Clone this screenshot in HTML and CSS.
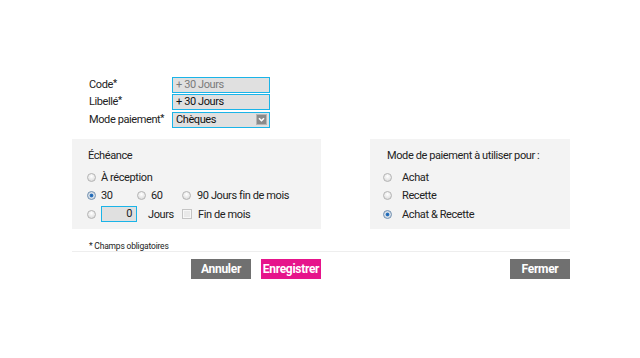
FILE: index.html
```html
<!DOCTYPE html>
<html>

<head>
    <title>Mode de paiement</title>
    <link rel="stylesheet" href="styles.css">
</head>

<body>

    <div class="dialog">

        <!-- Main fields -->
        <div class="fields">
            <div class="field">
                <label>Code<sup>*</sup></label>
                <div class="input muted">+ 30 Jours</div>
            </div>
            <div class="field">
                <label>Libellé<sup>*</sup></label>
                <div class="input">+ 30 Jours</div>
            </div>
            <div class="field last">
                <label>Mode paiement<sup>*</sup></label>
                <div class="input select">
                    <span>Chèques</span>
                    <svg class="arrow" width="11" height="11" viewBox="0 0 11 11">
                        <rect x="0.5" y="0.5" width="10" height="10" fill="#8a8a8a" stroke="#b5b5b5"/>
                        <path d="M3 4.2 L5.5 6.7 L8 4.2" fill="none" stroke="#fff" stroke-width="1.6"/>
                    </svg>
                </div>
            </div>
        </div>

        <!-- Panels -->
        <div class="panels">
            <div class="panel left">
                <div class="panel-title">Échéance</div>
                <div class="row">
                    <span class="cell"><span class="radio"></span>À réception</span>
                </div>
                <div class="row">
                    <span class="cell c1"><span class="radio on"></span>30</span>
                    <span class="cell c2"><span class="radio"></span>60</span>
                    <span class="cell"><span class="radio mid"></span>90 Jours fin de mois</span>
                </div>
                <div class="row">
                    <span class="cell c1"><span class="radio"></span><span class="num">0</span></span>
                    <span class="cell c2 jours">Jours</span>
                    <span class="cell"><span class="check"></span>Fin de mois</span>
                </div>
            </div>

            <div class="panel right">
                <div class="panel-title">Mode de paiement à utiliser pour :</div>
                <div class="row"><span class="cell"><span class="radio wide"></span>Achat</span></div>
                <div class="row"><span class="cell"><span class="radio wide"></span>Recette</span></div>
                <div class="row"><span class="cell"><span class="radio wide on"></span>Achat &amp; Recette</span></div>
            </div>
        </div>

        <div class="note">* Champs obligatoires</div>

        <div class="actions">
            <div class="group left">
                <button class="btn">Annuler</button>
                <button class="btn pink">Enregistrer</button>
            </div>
            <div class="group right">
                <button class="btn">Fermer</button>
            </div>
        </div>

    </div>

</body>

</html>
```

FILE: styles.css
```css
body {
    margin: 0;
    background-color: #fff;
    color: #222;
    font-family: Roboto, "Liberation Sans", Arial, sans-serif;
    font-size: 11px;
    letter-spacing: -0.4px;
}

.dialog {
    width: 498px;
    margin-left: 72px;
    padding-top: 76px;
}

.fields {
    padding-left: 17px;
}

.field {
    display: flex;
    align-items: center;
    height: 17px;
}

.field.last {
    margin-top: 1px;
}

.field label {
    width: 83px;
}

sup {
    font-size: 9px;
    font-weight: bold;
    vertical-align: 2px;
    line-height: 0;
}

.input {
    box-sizing: border-box;
    width: 98px;
    height: 16px;
    border: 1px solid #1ab4e8;
    background-color: #e0e0e0;
    padding: 0 3px;
    line-height: 14px;
    color: #111;
}

.input.muted {
    color: #7a7a7a;
}

.input.select {
    display: flex;
    align-items: center;
    justify-content: space-between;
    padding-right: 2px;
}

.arrow {
    display: block;
}

.panels {
    display: flex;
    justify-content: space-between;
    margin-top: 11px;
}

.panel {
    background-color: #f3f3f3;
    height: 90px;
    box-sizing: border-box;
    padding-top: 8px;
}

.panel.left {
    width: 249px;
    padding-left: 15px;
}

.panel.right {
    width: 200px;
    padding-left: 13px;
}

.panel-title {
    line-height: 18px;
    margin-bottom: 3px;
    padding-left: 1px;
}

.panel.right .panel-title {
    padding-left: 4px;
}

.row {
    display: flex;
    align-items: center;
    height: 18.5px;
}

.cell {
    display: flex;
    align-items: center;
}

.c1 {
    width: 50px;
}

.c2 {
    width: 45px;
}

.jours {
    padding-left: 11px;
    box-sizing: border-box;
}

.radio {
    box-sizing: border-box;
    width: 9px;
    height: 9px;
    border-radius: 50%;
    border: 1px solid #b4b4b4;
    background: radial-gradient(circle at 50% 35%, #fff 0, #e6e6e6 60%, #cfcfcf 100%);
    margin-right: 5px;
}

.radio.mid {
    margin-right: 6px;
}

.radio.wide {
    margin-right: 10px;
}

.radio.on {
    border-color: #6f8fb0;
    background: radial-gradient(circle, #1d5fa8 0, #2d78c4 30%, #cfd9e4 45%, #e8e8e8 100%);
}

.num {
    box-sizing: border-box;
    width: 36px;
    height: 16px;
    border: 1px solid #1ab4e8;
    background-color: #e0e0e0;
    text-align: right;
    padding-right: 4px;
    line-height: 14px;
}

.check {
    box-sizing: border-box;
    width: 10px;
    height: 10px;
    border: 1px solid #c4c4c4;
    background-color: #e9e9e9;
    box-shadow: inset 0 0 0 1px #f7f7f7;
    margin-right: 6px;
}

.note {
    font-size: 8.5px;
    letter-spacing: -0.2px;
    padding-left: 17px;
    margin-top: 12px;
    line-height: 10px;
    border-bottom: 1px solid #eeeeee;
}

.actions {
    display: flex;
    justify-content: space-between;
    margin-top: 7px;
}

.group {
    display: flex;
    gap: 10px;
    justify-content: flex-end;
}

.group.left {
    width: 249px;
}

.btn {
    width: 60px;
    height: 20px;
    border: none;
    border-radius: 0;
    background-color: #707070;
    color: #fff;
    font-family: Roboto, "Liberation Sans", Arial, sans-serif;
    font-size: 12px;
    font-weight: bold;
    letter-spacing: -0.3px;
    padding: 0;
}

.btn.pink {
    background-color: #e6148b;
}
```
